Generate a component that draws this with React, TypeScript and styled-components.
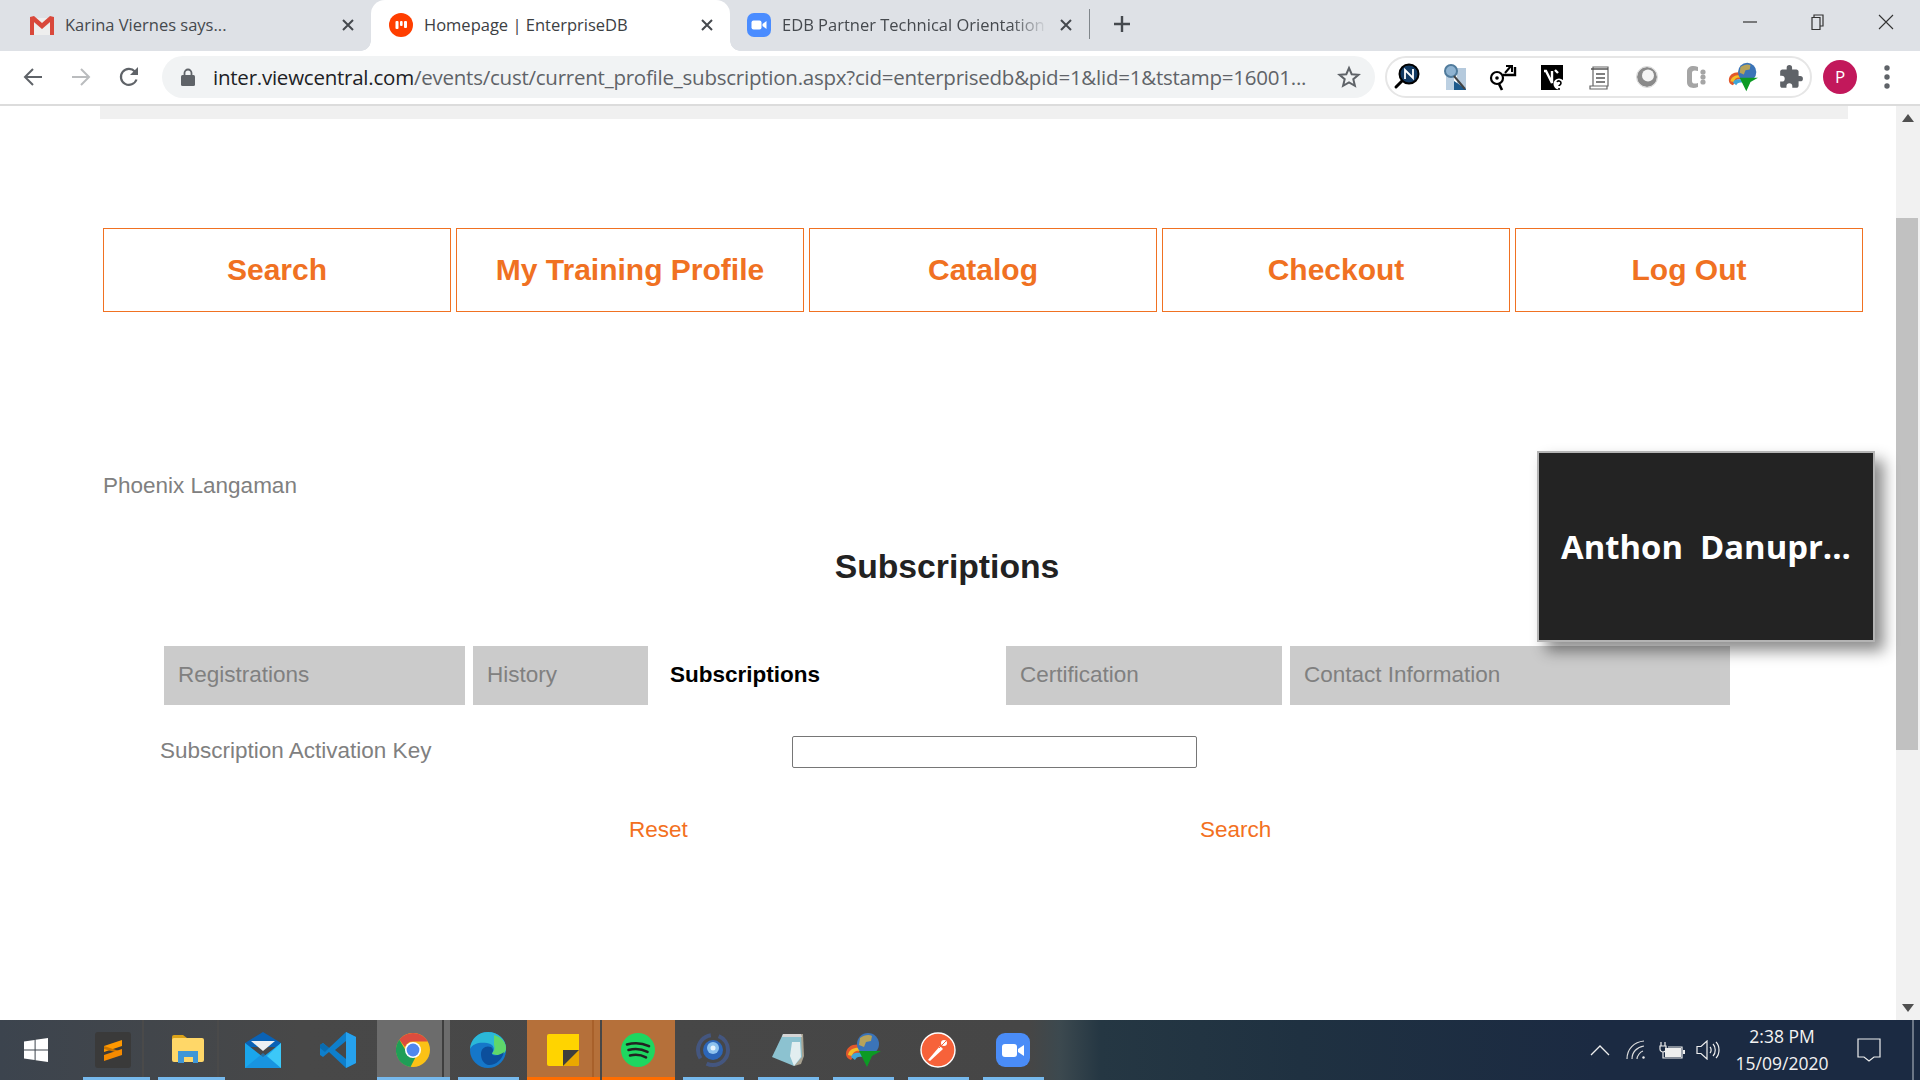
import { ReactNode } from 'react';
import styled, { createGlobalStyle } from 'styled-components';

const GlobalStyle = createGlobalStyle`
  html, body {
    margin: 0;
    padding: 0;
    background: #fff;
    overflow: hidden;
  }
  * {
    box-sizing: border-box;
  }
`;

const Screen = styled.div`
  width: 1920px;
  height: 1080px;
  display: flex;
  flex-direction: column;
  overflow: hidden;
  font-family: 'Liberation Sans', Arial, sans-serif;
`;

/* browser tab strip */
const TabStrip = styled.div`
  height: 51px;
  flex: none;
  display: flex;
  background: #dee1e6;
`;

const BrowserTab = styled.div<{ $width: number; $active?: boolean; $inset?: number }>`
  position: relative;
  width: ${({ $width }) => $width}px;
  flex: none;
  display: flex;
  align-items: center;
  gap: 11px;
  padding: 0 16px 2px ${({ $inset }) => $inset ?? 17}px;
  font-family: 'Open Sans', 'Noto Sans', sans-serif;
  font-size: 16.5px;
  color: ${({ $active }) => ($active ? '#3c4043' : '#45494e')};
  background: ${({ $active }) => ($active ? '#fff' : 'transparent')};
  border-radius: ${({ $active }) => ($active ? '14px 14px 0 0' : '0')};
`;

const TabFlare = styled.span<{ $side: 'left' | 'right' }>`
  position: absolute;
  bottom: 0;
  ${({ $side }) => ($side === 'left' ? 'left: -10px;' : 'right: -10px;')}
  width: 10px;
  height: 10px;
  background: radial-gradient(
    circle at ${({ $side }) => ($side === 'left' ? '0 0' : '100% 0')},
    #dee1e6 9.5px,
    #fff 10px
  );
`;

const TabTitle = styled.span<{ $fade?: boolean }>`
  flex: 1;
  min-width: 0;
  white-space: nowrap;
  overflow: hidden;
  ${({ $fade }) => $fade && 'mask-image: linear-gradient(90deg, #000 86%, transparent 100%);'}
`;

const TabClose = styled.svg`
  width: 14px;
  height: 14px;
  flex: none;
  stroke: #45494e;
  stroke-width: 2;
  fill: none;
`;

const NewTabGroup = styled.div`
  display: flex;
  align-items: center;
  gap: 23px;
  padding: 0 0 3px 0;
  flex: 1;
`;

const TabSeparator = styled.span`
  width: 1px;
  height: 30px;
  background: #80868b;
`;

const WindowButtons = styled.div`
  display: flex;
  padding-right: 0;
`;

const WindowButton = styled.div`
  width: 68px;
  height: 44px;
  display: flex;
  align-items: center;
  justify-content: center;
`;

/* address bar row */
const Toolbar = styled.div`
  height: 55px;
  flex: none;
  display: flex;
  align-items: center;
  padding: 0 0 2px 9px;
  background: #fff;
  border-bottom: 2px solid #dcdcdc;
`;

const NavIcon = styled.div`
  width: 48px;
  height: 42px;
  flex: none;
  display: flex;
  align-items: center;
  justify-content: center;
`;

const AddressBar = styled.div`
  width: 1213px;
  height: 42px;
  margin-left: 9px;
  flex: none;
  display: flex;
  align-items: center;
  padding: 0 14px 0 19px;
  border-radius: 21px;
  background: #f1f3f4;
`;

const UrlText = styled.div`
  flex: 1;
  margin-left: 18px;
  white-space: nowrap;
  overflow: hidden;
  font-family: 'Open Sans', 'Noto Sans', sans-serif;
  font-size: 20.5px;
  letter-spacing: -0.235px;
  color: #5f6368;
  & > b {
    font-weight: 400;
    color: #202124;
  }
`;

const ExtensionPill = styled.div`
  width: 427px;
  height: 42px;
  margin-left: 10px;
  flex: none;
  display: flex;
  align-items: center;
  border: 2px solid #e6e6e6;
  border-radius: 21px;
  & > svg {
    width: 48px;
    flex: none;
  }
  & > svg:first-child {
    margin-left: -4px;
  }
`;

const Avatar = styled.div`
  width: 34px;
  height: 34px;
  margin-left: 11px;
  flex: none;
  display: flex;
  align-items: center;
  justify-content: center;
  border-radius: 50%;
  background: #c2185b;
  color: #fff;
  font-family: 'Open Sans', sans-serif;
  font-size: 17px;
`;

const Kebab = styled.svg`
  margin-left: 26px;
  flex: none;
`;

/* page area */
const Viewport = styled.div`
  position: relative;
  flex: 1;
  min-height: 0;
  display: flex;
  background: #fff;
`;

const Page = styled.div`
  width: 1896px;
  flex: none;
`;

const TopStrip = styled.div`
  height: 13px;
  margin: 0 48px 0 100px;
  background: #f0f0f0;
`;

const NavRow = styled.nav`
  display: flex;
  gap: 5px;
  margin: 109px 0 0 103px;
`;

const NavButton = styled.a`
  width: 348px;
  height: 84px;
  flex: none;
  display: flex;
  align-items: center;
  justify-content: center;
  border: 1px solid #f07122;
  color: #f07122;
  font-size: 30px;
  font-weight: 700;
`;

const UserName = styled.div`
  margin: 160px 0 0 103px;
  height: 28px;
  line-height: 28px;
  font-size: 22.5px;
  color: #808080;
`;

const Heading = styled.h1`
  margin: 46px 0 0 0;
  padding-right: 2px;
  height: 40px;
  line-height: 40px;
  text-align: center;
  font-size: 33.7px;
  font-weight: 700;
  color: #222;
`;

const ProfileTabs = styled.div`
  display: flex;
  gap: 8px;
  height: 59px;
  margin: 60px 0 0 164px;
`;

const ProfileTab = styled.div<{ $width: number; $active?: boolean }>`
  width: ${({ $width }) => $width}px;
  flex: none;
  display: flex;
  align-items: center;
  padding: 0 0 2px 14px;
  font-size: 22.5px;
  font-weight: ${({ $active }) => ($active ? 700 : 400)};
  color: ${({ $active }) => ($active ? '#000' : '#808080')};
  background: ${({ $active }) => ($active ? '#fff' : '#cbcbcb')};
`;

const FormRow = styled.div`
  display: flex;
  align-items: center;
  margin: 31px 0 0 160px;
  height: 32px;
`;

const FieldLabel = styled.label`
  width: 632px;
  flex: none;
  padding-bottom: 2px;
  font-size: 22.5px;
  color: #808080;
`;

const KeyInput = styled.input`
  width: 405px;
  height: 32px;
  border: 1px solid #767676;
  border-radius: 2px;
  background: #fff;
`;

const ActionRow = styled.div`
  display: grid;
  grid-template-columns: 571px auto;
  margin: 48px 0 0 629px;
  height: 28px;
  line-height: 28px;
`;

const ActionLink = styled.a`
  font-size: 22.5px;
  color: #f37021;
`;

const ScrollTrack = styled.div`
  flex: 1;
  display: flex;
  flex-direction: column;
  align-items: center;
  background: #f1f1f1;
`;

const ScrollButton = styled.div`
  height: 24px;
  flex: none;
  display: flex;
  align-items: center;
  justify-content: center;
`;

const ScrollGap = styled.div<{ $height?: number }>`
  flex: ${({ $height }) => ($height ? 'none' : 1)};
  height: ${({ $height }) => ($height ? `${$height}px` : 'auto')};
`;

const ScrollThumb = styled.div`
  width: 22px;
  height: 532px;
  margin-right: 2px;
  flex: none;
  background: #c1c1c1;
`;

const MeetingTile = styled.div`
  position: absolute;
  left: 1537px;
  top: 345px;
  width: 338px;
  height: 191px;
  display: flex;
  align-items: center;
  justify-content: center;
  border: 2px solid #b4b4b4;
  background: #232323;
  box-shadow: 9px 9px 14px rgba(0, 0, 0, 0.45);
  color: #fff;
  font-family: 'Open Sans', 'Noto Sans', sans-serif;
  font-size: 32.8px;
  font-weight: 700;
  white-space: pre;
`;

/* windows taskbar */
const Taskbar = styled.div`
  height: 60px;
  flex: none;
  display: flex;
  align-items: stretch;
  background: linear-gradient(
    90deg,
    #3c444e 0,
    #484848 300px,
    #464646 1030px,
    #3c494f 1060px,
    #253743 1100px,
    #1f3141 1300px,
    #1b2a42 1600px,
    #1b2a42 100%
  );
`;

const StartButton = styled.div`
  width: 75px;
  flex: none;
  display: flex;
  align-items: center;
  justify-content: center;
  padding-right: 3px;
`;

type SlotState = 'idle' | 'open' | 'active' | 'attention';

const slotBack: Record<SlotState, string> = {
  idle: 'transparent',
  open: 'transparent',
  active: 'linear-gradient(90deg, transparent 2px, #6c6c6c 2px)',
  attention: 'linear-gradient(90deg, transparent 2px, #b5703a 2px)',
};

const TaskSlot = styled.div<{ $state: SlotState; $stacked?: boolean }>`
  position: relative;
  width: 75px;
  flex: none;
  display: flex;
  align-items: center;
  justify-content: center;
  background: ${({ $state }) => slotBack[$state]};

  &::after {
    content: '';
    position: absolute;
    bottom: 0;
    height: 3px;
    left: ${({ $state }) => ($state === 'attention' || $state === 'active' ? '2px' : '8px')};
    right: ${({ $state, $stacked }) => ($state === 'attention' || $state === 'active' || $stacked ? 0 : '6px')};
    display: ${({ $state }) => ($state === 'idle' ? 'none' : 'block')};
    background: ${({ $state }) => ($state === 'attention' ? '#ff6d00' : '#76b9ed')};
  }
`;

const StackEdge = styled.span<{ $tone: string }>`
  position: absolute;
  top: 0;
  bottom: 0;
  right: 6px;
  width: 2px;
  background: ${({ $tone }) => $tone};
`;

const Tray = styled.div`
  flex: 1;
  display: flex;
  align-items: center;
  justify-content: flex-end;
  padding-right: 6px;
  color: #fff;
`;

const TrayIcon = styled.div<{ $width: number }>`
  width: ${({ $width }) => $width}px;
  flex: none;
  display: flex;
  justify-content: center;
`;

const Clock = styled.div`
  width: 100px;
  margin-left: 6px;
  flex: none;
  text-align: center;
  font-family: 'Open Sans', 'Noto Sans', sans-serif;
  font-size: 17.5px;
  line-height: 27px;
  color: #f3f3f3;
`;

const ActionCenter = styled.div`
  width: 80px;
  padding-left: 25px;
  flex: none;
  display: flex;
`;

const TrayEdge = styled.span`
  width: 2px;
  height: 60px;
  background: #6b7686;
`;

const GmailIcon = () => (
  <svg width="24" height="20" viewBox="0 0 24 20">
    <path d="M2 3h20v17H2z" fill="#eee" />
    <path d="M2 3l10 8 10-8v3l-10 8L2 6z" fill="#d9d9d9" />
    <path d="M0 2l4-1 8 7 8-7 4 1v18h-4V7l-8 7-8-7v13H0z" fill="#d9483b" />
  </svg>
);

const EdbIcon = () => (
  <svg width="24" height="24" viewBox="0 0 24 24">
    <circle cx="12" cy="12" r="12" fill="#ff3e00" />
    <rect x="6.5" y="8" width="3" height="8" rx="1" fill="#fff" />
    <rect x="11" y="8" width="2.6" height="5" rx="1" fill="#fff" />
    <rect x="15" y="8" width="3" height="7" rx="1" fill="#fff" />
  </svg>
);

const ZoomTabIcon = () => (
  <svg width="24" height="24" viewBox="0 0 24 24">
    <rect width="24" height="24" rx="7" fill="#4a8cff" />
    <rect x="4.5" y="7.5" width="10" height="9" rx="2" fill="#fff" />
    <path d="M15.5 11l4-3v8l-4-3z" fill="#fff" />
  </svg>
);

const CloseGlyph = () => (
  <TabClose viewBox="0 0 14 14">
    <path d="M2 2l10 10M12 2L2 12" />
  </TabClose>
);

const ExtA = () => (
  <svg height="30" viewBox="0 0 30 30">
    <circle cx="17" cy="12" r="9.5" fill="#123a63" stroke="#000" strokeWidth="2" />
    <path d="M13 17V8l8 8V7" fill="none" stroke="#fff" strokeWidth="1.8" />
    <path d="M10 19l-6 6" stroke="#000" strokeWidth="3" strokeLinecap="round" />
  </svg>
);

const ExtB = () => (
  <svg height="30" viewBox="0 0 30 30">
    <path d="M6 4h8v24H6z" fill="#bcd0e2" />
    <path d="M17 6h9v22h-9z" fill="#b5cadd" />
    <path d="M14 19l12 8v1H14z" fill="#1d5a8c" />
    <circle cx="11" cy="9" r="6" fill="#8fb3d1" stroke="#507b9c" strokeWidth="2" />
    <path d="M14 14l11 13" stroke="#444" strokeWidth="2" />
  </svg>
);

const ExtC = () => (
  <svg height="30" viewBox="0 0 30 30">
    <circle cx="9" cy="16" r="6" fill="#fff" stroke="#000" strokeWidth="2.2" />
    <circle cx="9" cy="16" r="1.8" fill="#000" />
    <path d="M11 22l3 6" stroke="#000" strokeWidth="2.6" />
    <path d="M15 13h12V5" fill="none" stroke="#000" strokeWidth="2.4" />
    <path d="M17 11l6-7M18 4h6v6" fill="none" stroke="#000" strokeWidth="2" />
  </svg>
);

const ExtD = () => (
  <svg height="30" viewBox="0 0 30 30">
    <path d="M5 3h22v18h-3v7H5z" fill="#000" />
    <path d="M8 9h2l6 12V9M19 8l3 3" stroke="#fff" strokeWidth="2.4" fill="none" />
    <circle cx="23" cy="22" r="5.5" fill="#fff" />
    <path d="M21 20c1-2 4-1 4 1s-2 2-2 3M23 26v1.500" stroke="#000" strokeWidth="1.6" fill="none" />
  </svg>
);

const ExtE = () => (
  <svg height="30" viewBox="0 0 30 30">
    <path d="M9 5h15v19H9zM6 24h17v3H6z" fill="#fff" stroke="#666" strokeWidth="1.2" />
    <path d="M7 7h17M12 12h9M12 16h9M12 20h9" stroke="#555" strokeWidth="1.4" />
  </svg>
);

const ExtF = () => (
  <svg height="30" viewBox="0 0 30 30">
    <circle cx="15" cy="15" r="10" fill="#8a8a8a" />
    <circle cx="15" cy="15" r="10.500" fill="none" stroke="#d8d8d8" strokeWidth="1" />
    <circle cx="16" cy="13.500" r="6" fill="#f4f4f4" />
  </svg>
);

const ExtG = () => (
  <svg height="30" viewBox="0 0 30 30">
    <path d="M18 5c-5-2-11-1-11 5v10c0 6 6 7 11 5v-4c-3 1-6 1-6-2v-8c0-3 3-3 6-2z" fill="#a5a5a5" />
    <circle cx="23" cy="10" r="2.6" fill="#a5a5a5" />
    <circle cx="23" cy="15" r="2.6" fill="#a5a5a5" />
    <circle cx="23" cy="20" r="2.6" fill="#a5a5a5" />
  </svg>
);

const IdmArt = ({ size }: { size: number }) => (
  <svg width={size} height={size} viewBox="0 0 36 36">
    <path d="M1 22c0-8 8-11 16-9v8c-5-1-8 0-9 4l-2 3c-3-1-5-3-5-6z" fill="#e2572b" />
    <path d="M3 23c1-6 7-8 13-7v3c-4-1-8 0-9 5z" fill="#f2c028" />
    <path d="M6 25c1-4 5-5 10-4l2 4c-4-1-7 0-8 3z" fill="#3fa6d8" />
    <circle cx="23" cy="12" r="11" fill="#3b74b8" />
    <path d="M15 6c4-3 9-4 12-2l-1 5-5 1-2 5-5-2z" fill="#b7a35a" />
    <path d="M14 19h22l-9 5-5 11z" fill="#0c9a24" />
  </svg>
);

const PuzzleIcon = () => (
  <svg height="26" viewBox="0 0 24 24">
    <path
      fill="#5f6368"
      d="M20.5 11H19V7c0-1.1-.9-2-2-2h-4V3.500a2.500 2.500 0 0 0-5 0V5H4c-1.100 0-2 .9-2 2v3.800h1.500a2.700 2.700 0 0 1 0 5.400H2V20c0 1.100.9 2 2 2h3.800v-1.500a2.700 2.700 0 0 1 5.400 0V22H17c1.100 0 2-.9 2-2v-4h1.500a2.500 2.500 0 0 0 0-5z"
    />
  </svg>
);

const WinLogo = () => (
  <svg width="24" height="24" viewBox="0 0 24 24" fill="#fff">
    <path d="M0 3.400l10.600-1.500v9.500H0zM11.600 1.800L24 0v11.400H11.600zM0 12.500h10.600v9.600L0 20.600zM11.600 12.500H24V24l-12.400-1.800z" />
  </svg>
);

const SublimeIcon = () => (
  <svg width="36" height="36" viewBox="0 0 36 36">
    <rect width="36" height="36" rx="3" fill="#3a3a3a" />
    <path d="M9 14l18-6v6L9 20z" fill="#ff9800" />
    <path d="M9 14l18 6v2L9 17z" fill="#c97400" />
    <path d="M27 17L9 23v6l18-6z" fill="#f58a00" />
  </svg>
);

const FolderIcon = () => (
  <svg width="32" height="30" viewBox="0 0 32 30">
    <path d="M0 2a2 2 0 0 1 2-2h9l4 3v4H0z" fill="#dba218" />
    <rect y="3" width="32" height="24" rx="2" fill="#ffd768" />
    <path d="M5 28V16h20v12h-5v-6h-9v6z" fill="#3f96d6" transform="translate(1 0)" />
  </svg>
);

const MailIcon = () => (
  <svg width="36" height="36" viewBox="0 0 36 36">
    <path d="M18 0l18 11v4H0v-4z" fill="#0a62b5" />
    <path d="M6 9h24l-12 10z" fill="#eef0f2" />
    <path d="M0 11l18 14 18-14v25H0z" fill="#1aa6ec" />
    <path d="M0 36l18-15 18 15z" fill="#1888d8" opacity="0.6" />
    <path d="M36 11v25L22 24z" fill="#3cc8f8" />
  </svg>
);

const VsCodeIcon = () => (
  <svg width="36" height="36" viewBox="0 0 36 36">
    <path d="M26 0l10 5v26l-10 5L9 20 3 25l-3-2v-10l3-2 6 5z" fill="#0e7fcc" />
    <path d="M26 0l10 5v26l-10 5z" fill="#26a2ee" />
    <path d="M26 9v18l-11-9z" fill="#474747" />
    <path d="M0 13l3-2 6 5-4 4-5-4z" fill="#0a6cb0" />
  </svg>
);

const ChromeIcon = () => (
  <svg width="34" height="34" viewBox="0 0 34 34">
    <circle cx="17" cy="17" r="17" fill="#fbc116" />
    <path d="M17 0a17 17 0 0 1 14.700 8.500H17a8.500 8.500 0 0 0-8 5.600L3.400 6.800A17 17 0 0 1 17 0z" fill="#dc4c3e" />
    <path d="M3.400 6.800L10 18a8.500 8.500 0 0 0 9.600 6.100L14.500 34A17 17 0 0 1 3.400 6.800z" fill="#1f9e57" />
    <circle cx="17" cy="17" r="8" fill="#fff" />
    <circle cx="17" cy="17" r="6.400" fill="#4f87ee" />
  </svg>
);

const EdgeIcon = () => (
  <svg width="36" height="36" viewBox="0 0 36 36">
    <circle cx="18" cy="18" r="18" fill="#1577c9" />
    <path d="M0 17C1 6 9 0 18 0c10 0 18 7 18 16 0 5-4 7-8 7-3 0-6-1-6-2 3-2 3-9-5-10-7-1-14 0-17 6z" fill="#2bb8d8" />
    <path d="M24 3c7 2 12 7 12 13 0 5-4 7-8 7-3 0-6-1-6-2 3-2 3-6 2-8z" fill="#5fd86a" />
    <path d="M11 22c0-6 5-9 10-7 3 2 2 5 1 6-1 2 2 3 6 2 3-1 5-2 6-3-2 8-9 14-16 13-5-2-7-6-7-11z" fill="#0c4f9c" />
  </svg>
);

const StickyIcon = () => (
  <svg width="32" height="32" viewBox="0 0 32 32">
    <path d="M2 0h30v30a2 2 0 0 1-2 2H2a2 2 0 0 1-2-2V2a2 2 0 0 1 2-2z" fill="#ffd400" />
    <path d="M16 32l16-16v14a2 2 0 0 1-2 2z" fill="#eaa800" />
    <path d="M16 32V16h16z" fill="#3d3d3d" />
  </svg>
);

const SpotifyIcon = () => (
  <svg width="34" height="34" viewBox="0 0 34 34">
    <circle cx="17" cy="17" r="17" fill="#1ed760" />
    <path d="M6 11.500c7-2 15-1.600 22 1.600M7.500 17c6-1.600 13-1.200 19 1.800M9 22.500c5-1.200 11-.8 16 1.800" stroke="#222" strokeWidth="2.600" fill="none" strokeLinecap="round" />
  </svg>
);

const SyncGlobeIcon = () => (
  <svg width="36" height="36" viewBox="0 0 36 36">
    <ellipse cx="18" cy="18" rx="15" ry="15" fill="none" stroke="#44567f" strokeWidth="4" strokeDasharray="30 8" />
    <circle cx="18" cy="18" r="10" fill="#2c66b8" />
    <circle cx="18" cy="16" r="6" fill="#8dc2ee" />
    <circle cx="18" cy="16" r="2.500" fill="#e6f3fc" />
  </svg>
);

const NotepadIcon = () => (
  <svg width="32" height="34" viewBox="0 0 32 34">
    <path d="M11 1h20l1 22-3 8-7 2z" fill="#a8a291" />
    <path d="M11 1h18l1 23-8 9L0 24z" fill="#8cc2d0" />
    <path d="M20 9h8l1 15-7 9-4-10z" fill="#e2eef0" />
    <path d="M11 1h18l1 3H10z" fill="#d4d4d4" />
  </svg>
);

const PostmanIcon = () => (
  <svg width="36" height="36" viewBox="0 0 36 36">
    <circle cx="18" cy="18" r="17" fill="#f7623a" stroke="#fff" strokeWidth="1.400" />
    <path d="M8 28l12-14 3 3-13 12z" fill="#fff" />
    <circle cx="24" cy="11" r="3" fill="#fff" />
    <path d="M19 16l7-7" stroke="#f7623a" strokeWidth="1" />
  </svg>
);

const ZoomIcon = () => (
  <svg width="34" height="34" viewBox="0 0 34 34">
    <rect width="34" height="34" rx="9" fill="#4a8cf7" />
    <rect x="6" y="11" width="15" height="13" rx="3" fill="#fff" />
    <path d="M22 16l6-4v11l-6-4z" fill="#fff" />
  </svg>
);

const taskItems: { icon: ReactNode; state: SlotState; stacked?: boolean; edge?: string }[] = [
  { icon: <SublimeIcon />, state: 'open', stacked: true, edge: '#4a4a4a' },
  { icon: <FolderIcon />, state: 'open', stacked: true, edge: '#4a4a4a' },
  { icon: <MailIcon />, state: 'idle' },
  { icon: <VsCodeIcon />, state: 'idle' },
  { icon: <ChromeIcon />, state: 'active', edge: '#3e3e3e' },
  { icon: <EdgeIcon />, state: 'open' },
  { icon: <StickyIcon />, state: 'attention', edge: '#a8602a' },
  { icon: <SpotifyIcon />, state: 'attention' },
  { icon: <SyncGlobeIcon />, state: 'open' },
  { icon: <NotepadIcon />, state: 'open' },
  { icon: <IdmArt size={36} />, state: 'open' },
  { icon: <PostmanIcon />, state: 'open' },
  { icon: <ZoomIcon />, state: 'open' },
];

const navItems = ['Search', 'My Training Profile', 'Catalog', 'Checkout', 'Log Out'];

export default function App() {
  return (
    <Screen>
      <GlobalStyle />
      <TabStrip>
        <BrowserTab $width={371} $inset={30}>
          <GmailIcon />
          <TabTitle>Karina Viernes says...</TabTitle>
          <CloseGlyph />
        </BrowserTab>
        <BrowserTab $width={359} $active $inset={18}>
          <TabFlare $side="left" />
          <EdbIcon />
          <TabTitle>Homepage | EnterpriseDB</TabTitle>
          <CloseGlyph />
          <TabFlare $side="right" />
        </BrowserTab>
        <BrowserTab $width={359}>
          <ZoomTabIcon />
          <TabTitle $fade>EDB Partner Technical Orientation</TabTitle>
          <CloseGlyph />
        </BrowserTab>
        <NewTabGroup>
          <TabSeparator />
          <svg width="18" height="18" viewBox="0 0 18 18">
            <path d="M9 1v16M1 9h16" stroke="#45494e" strokeWidth="2.4" />
          </svg>
        </NewTabGroup>
        <WindowButtons>
          <WindowButton>
            <svg width="16" height="16" viewBox="0 0 16 16">
              <path d="M1 8h14" stroke="#333" strokeWidth="1.2" />
            </svg>
          </WindowButton>
          <WindowButton>
            <svg width="16" height="16" viewBox="0 0 16 16" fill="none" stroke="#333" strokeWidth="1.2">
              <path d="M4 3V1h9v11h-3" />
              <path d="M2 3.500h8v12H2z" />
            </svg>
          </WindowButton>
          <WindowButton>
            <svg width="16" height="16" viewBox="0 0 16 16">
              <path d="M1 1l14 14M15 1L1 15" stroke="#333" strokeWidth="1.1" />
            </svg>
          </WindowButton>
        </WindowButtons>
      </TabStrip>

      <Toolbar>
        <NavIcon>
          <svg width="20" height="20" viewBox="0 0 20 20" fill="none" stroke="#5f6368" strokeWidth="2">
            <path d="M19 10H2M10 2l-8 8 8 8" />
          </svg>
        </NavIcon>
        <NavIcon>
          <svg width="20" height="20" viewBox="0 0 20 20" fill="none" stroke="#babcbe" strokeWidth="2">
            <path d="M1 10h17M10 2l8 8-8 8" />
          </svg>
        </NavIcon>
        <NavIcon>
          <svg width="22" height="22" viewBox="0 0 22 22">
            <path d="M18.500 13.500a8 8 0 1 1-1.600-8" fill="none" stroke="#5f6368" strokeWidth="2.200" />
            <path d="M20 1v8h-8z" fill="#5f6368" />
          </svg>
        </NavIcon>
        <AddressBar>
          <svg width="14" height="18" viewBox="0 0 14 18">
            <path d="M3.500 8V5a3.500 3.500 0 0 1 7 0v3" fill="none" stroke="#5f6368" strokeWidth="1.800" />
            <rect y="7" width="14" height="11" rx="1.500" fill="#5f6368" />
          </svg>
          <UrlText>
            <b>inter.viewcentral.com</b>/events/cust/current_profile_subscription.aspx?cid=enterprisedb&amp;pid=1&amp;lid=1&amp;tstamp=16001...
          </UrlText>
          <svg width="24" height="24" viewBox="0 0 24 24">
            <path d="M12 3l2.700 6.200 6.800.6-5.200 4.400 1.600 6.600L12 17.300l-5.900 3.500 1.600-6.600-5.200-4.400 6.800-.6z" fill="none" stroke="#5f6368" strokeWidth="2" />
          </svg>
        </AddressBar>
        <ExtensionPill>
          <ExtA />
          <ExtB />
          <ExtC />
          <ExtD />
          <ExtE />
          <ExtF />
          <ExtG />
          <IdmArt size={30} />
          <PuzzleIcon />
        </ExtensionPill>
        <Avatar>P</Avatar>
        <Kebab width="8" height="26" viewBox="0 0 8 26" fill="#5f6368">
          <circle cx="4" cy="4" r="2.700" />
          <circle cx="4" cy="13" r="2.700" />
          <circle cx="4" cy="22" r="2.700" />
        </Kebab>
      </Toolbar>

      <Viewport>
        <Page>
          <TopStrip />
          <NavRow>
            {navItems.map((item) => (
              <NavButton key={item}>{item}</NavButton>
            ))}
          </NavRow>
          <UserName>Phoenix Langaman</UserName>
          <Heading>Subscriptions</Heading>
          <ProfileTabs>
            <ProfileTab $width={301}>Registrations</ProfileTab>
            <ProfileTab $width={175}>History</ProfileTab>
            <ProfileTab $width={342} $active>
              Subscriptions
            </ProfileTab>
            <ProfileTab $width={276}>Certification</ProfileTab>
            <ProfileTab $width={440}>Contact Information</ProfileTab>
          </ProfileTabs>
          <FormRow>
            <FieldLabel>Subscription Activation Key</FieldLabel>
            <KeyInput type="text" />
          </FormRow>
          <ActionRow>
            <ActionLink>Reset</ActionLink>
            <ActionLink>Search</ActionLink>
          </ActionRow>
        </Page>
        <ScrollTrack>
          <ScrollButton>
            <svg width="12" height="8" viewBox="0 0 12 8">
              <path d="M6 0l6 8H0z" fill="#505050" />
            </svg>
          </ScrollButton>
          <ScrollGap $height={88} />
          <ScrollThumb />
          <ScrollGap />
          <ScrollButton>
            <svg width="12" height="8" viewBox="0 0 12 8">
              <path d="M0 0h12L6 8z" fill="#505050" />
            </svg>
          </ScrollButton>
        </ScrollTrack>
        <MeetingTile>{'Anthon  Danupr...'}</MeetingTile>
      </Viewport>

      <Taskbar>
        <StartButton>
          <WinLogo />
        </StartButton>
        {taskItems.map((item, i) => (
          <TaskSlot key={i} $state={item.state} $stacked={item.stacked}>
            {item.icon}
            {item.edge && <StackEdge $tone={item.edge} />}
          </TaskSlot>
        ))}
        <Tray>
          <TrayIcon $width={36}>
            <svg width="20" height="12" viewBox="0 0 20 12" fill="none" stroke="#eee" strokeWidth="1.300">
              <path d="M1 11l9-9 9 9" />
            </svg>
          </TrayIcon>
          <TrayIcon $width={36}>
            <svg width="20" height="20" viewBox="0 0 20 20" fill="none" stroke="#ddd" strokeWidth="1.200">
              <path d="M1 19C1 9 8 2 18 1M6 19c0-7 5-12 12-13M11 19c0-3 3-7 6-8" />
              <circle cx="17.500" cy="17.500" r="1.200" fill="#eee" stroke="none" />
            </svg>
          </TrayIcon>
          <TrayIcon $width={36}>
            <svg width="26" height="18" viewBox="0 0 26 18" fill="none" stroke="#eee" strokeWidth="1.200">
              <path d="M2 1v4M6 1v4M1 5h6v3a3 3 0 0 1-6 0zM4 11v6h19V6H9" />
              <rect x="6" y="7" width="16" height="9" fill="#eee" stroke="none" />
              <rect x="24" y="9" width="2" height="4" fill="#eee" stroke="none" />
            </svg>
          </TrayIcon>
          <TrayIcon $width={36}>
            <svg width="24" height="20" viewBox="0 0 24 20" fill="none" stroke="#eee" strokeWidth="1.200">
              <path d="M1 6.500h4L11 1v18l-6-5.500H1z" />
              <path d="M14 7c1.500 1.500 1.500 4.500 0 6M17 4c3 3 3 9 0 12M20 2c4 4 4 12 0 16" />
            </svg>
          </TrayIcon>
          <Clock>
            <div>2:38 PM</div>
            <div>15/09/2020</div>
          </Clock>
          <ActionCenter>
            <svg width="24" height="24" viewBox="0 0 24 24" fill="none" stroke="#eee" strokeWidth="1.200">
              <path d="M1 1h22v18h-6l-5 4-5-4H1z" />
            </svg>
          </ActionCenter>
          <TrayEdge />
        </Tray>
      </Taskbar>
    </Screen>
  );
}
